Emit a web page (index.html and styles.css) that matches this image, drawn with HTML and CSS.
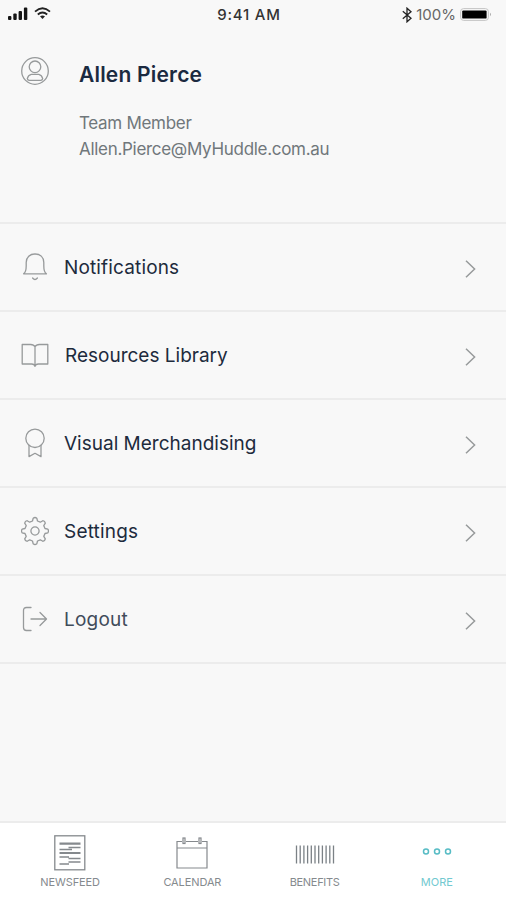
FILE: index.html
```
<!DOCTYPE html>
<html lang="en">
<head>
    <meta charset="UTF-8">
    <meta name="viewport" content="width=device-width, initial-scale=1.0">
    <link rel="stylesheet" href="styles.css">
    <title>More</title>
</head>
<body>
    <div class="screen">

        <div class="status">
            <div class="status_left">
                <svg width="20" height="14" viewBox="0 0 20 14" fill="#151515">
                    <rect x="0" y="9" width="3.4" height="4" rx="1"/>
                    <rect x="5.3" y="6.5" width="3.4" height="6.5" rx="1"/>
                    <rect x="10.6" y="4" width="3.4" height="9" rx="1"/>
                    <rect x="15.9" y="0.5" width="3.4" height="12.5" rx="1"/>
                </svg>
                <svg width="17" height="13" viewBox="0 0 17 13" fill="none" stroke="#222" stroke-width="1.8">
                    <path d="M1 4.6Q8.5-2 16 4.6"/>
                    <path d="M3.8 7.5Q8.5 3.4 13.2 7.5"/>
                    <path d="M6 9.3Q8.5 7.5 11 9.3L8.5 12Z" fill="#222" stroke="none"/>
                </svg>
            </div>
            <div class="time">9:41 AM</div>
            <div class="status_right">
                <svg width="10" height="16" viewBox="0 0 10 16" fill="none" stroke="#222" stroke-width="1.3">
                    <path d="M.8 4.3L9 11.2 5 14.8V1.2L9 4.8.8 11.7"/>
                </svg>
                <span class="percent">100%</span>
                <svg width="32" height="13" viewBox="0 0 32 13">
                    <rect x=".6" y=".6" width="27.8" height="11.8" rx="3" fill="#f8f8f8" stroke="#c4c4c4"/>
                    <rect x="2.2" y="2.4" width="24.4" height="8.2" rx="1.2" fill="#000"/>
                    <path d="M30 4.8Q32 6.5 30 8.2Z" fill="#aaa"/>
                </svg>
            </div>
        </div>

        <div class="profile">
            <svg class="avatar" width="28" height="28" viewBox="0 0 28 28">
                <circle cx="14" cy="14" r="13.3"/>
                <circle cx="14" cy="9.8" r="5.8"/>
                <path d="M10.2 17.4H17.8Q20.8 18.2 21.7 21.6Q21.4 23.3 19.8 23.3H8.2Q6.6 23.3 6.3 21.6Q7.2 18.2 10.2 17.4Z"/>
            </svg>
            <div class="info">
                <div class="name">Allen Pierce</div>
                <div class="role">Team Member</div>
                <div class="email">Allen.Pierce@MyHuddle.com.au</div>
            </div>
        </div>

        <div class="menu">
            <div class="row">
                <svg class="icon" width="28" height="30" viewBox="0 0 28 30">
                    <path d="M2.6 21.8Q5.2 20 5.2 14V10.5C5.2 5 9 2 14 2S22.8 5 22.8 10.5V14Q22.8 20 25.4 21.8Z"/>
                    <path d="M11.6 26Q14 29 16.4 26"/>
                </svg>
                <span class="label notifications">Notifications</span>
                <svg class="arrow" width="11" height="18" viewBox="0 0 11 18"><path d="M1 .8L9.6 9 1 17.2"/></svg>
            </div>
            <div class="row">
                <svg class="icon" width="28" height="30" viewBox="0 0 28 30">
                    <path d="M14 26.3V6.8Q12.8 4.5 9.6 4.5H1.2V24H10.6Q13.5 24 14 26.3Q14.5 24 17.4 24H26.8V4.5H18.4Q15.2 4.5 14 6.8"/>
                </svg>
                <span class="label resources">Resources Library</span>
                <svg class="arrow" width="11" height="18" viewBox="0 0 11 18"><path d="M1 .8L9.6 9 1 17.2"/></svg>
            </div>
            <div class="row">
                <svg class="icon" width="28" height="30" viewBox="0 0 28 30">
                    <circle cx="14" cy="10.3" r="9.2"/>
                    <path d="M8 17.5V28.6L14 25.3 20 28.6V17.5"/>
                </svg>
                <span class="label">Visual Merchandising</span>
                <svg class="arrow" width="11" height="18" viewBox="0 0 11 18"><path d="M1 .8L9.6 9 1 17.2"/></svg>
            </div>
            <div class="row">
                <svg class="icon" width="28" height="30" viewBox="-14 -15 28 30">
                    <path d="M-2.5-10L-1.8-12.8Q0-14.2 1.8-12.8L2.5-10 5.3-8.8 7.8-10.3Q10-10 10.3-7.8L8.8-5.3 10-2.5 12.8-1.8Q14.2 0 12.8 1.8L10 2.5 8.8 5.3 10.3 7.8Q10 10 7.8 10.3L5.3 8.8 2.5 10 1.8 12.8Q0 14.2-1.8 12.8L-2.5 10-5.3 8.8-7.8 10.3Q-10 10-10.3 7.8L-8.8 5.3-10 2.5-12.8 1.8Q-14.2 0-12.8-1.8L-10-2.5-8.8-5.3-10.3-7.8Q-10-10-7.8-10.3L-5.3-8.8Z"/>
                    <circle cx="0" cy="0" r="4.1"/>
                </svg>
                <span class="label settings">Settings</span>
                <svg class="arrow" width="11" height="18" viewBox="0 0 11 18"><path d="M1 .8L9.6 9 1 17.2"/></svg>
            </div>
            <div class="row">
                <svg class="icon" width="28" height="30" viewBox="0 0 28 30">
                    <path d="M10 3.5H5.5Q2.5 3.5 2.5 6.5V23.5Q2.5 26.5 5.5 26.5H10"/>
                    <path d="M10 15H25.3M19 8.5L25.5 15 19 21.5"/>
                </svg>
                <span class="label logout">Logout</span>
                <svg class="arrow" width="11" height="18" viewBox="0 0 11 18"><path d="M1 .8L9.6 9 1 17.2"/></svg>
            </div>
        </div>

        <div class="tabs">
            <div class="tab">
                <svg width="32" height="36" viewBox="0 0 32 36" fill="none" stroke="#85898d">
                    <rect x=".8" y=".8" width="30" height="34" stroke-width="1.3"/>
                    <path d="M5.5 8.7H26.5M5.5 18H26.5" stroke-width="2.2"/>
                    <path d="M14.5 12.5H26.5M5.5 14.5H18M5.5 22H15M14.5 23.5H26.5M14.5 27H26.5M5.5 29H15" stroke-width="1.6"/>
                </svg>
                <span class="tab_text">NEWSFEED</span>
            </div>
            <div class="tab">
                <svg width="32" height="36" viewBox="0 0 32 36" fill="none" stroke="#85898d" stroke-width="1.2">
                    <path d="M6 6.5H1V33H31V6.5H26M10 6.5H22M1 13H31"/>
                    <rect x="7" y="3" width="2" height="5.5"/>
                    <rect x="23" y="3" width="2" height="5.5"/>
                </svg>
                <span class="tab_text">CALENDAR</span>
            </div>
            <div class="tab">
                <svg width="40" height="36" viewBox="0 0 40 36" fill="none" stroke="#7b8186" stroke-width="1.3">
                    <path d="M1.5 10.5V28.5M5.2 10.5V28.5M8.9 10.5V28.5M12.6 10.5V28.5M16.3 10.5V28.5M20 10.5V28.5M23.7 10.5V28.5M27.4 10.5V28.5M31.1 10.5V28.5M34.8 10.5V28.5M38.5 10.5V28.5"/>
                </svg>
                <span class="tab_text benefits">BENEFITS</span>
            </div>
            <div class="tab active">
                <svg width="30" height="36" viewBox="0 0 30 36" fill="none" stroke="#57bcc5" stroke-width="1.5">
                    <circle cx="4" cy="16.5" r="2.5"/>
                    <circle cx="15" cy="16.5" r="2.5"/>
                    <circle cx="26" cy="16.5" r="2.5"/>
                </svg>
                <span class="tab_text more">MORE</span>
            </div>
        </div>

    </div>
</body>
</html>
```
FILE: styles.css
```
*{
    margin:0;
    padding:0;
    box-sizing: border-box;
}

body{
    background-color: #f8f8f8;
    font-family: Inter, "Liberation Sans", sans-serif;
    overflow: hidden;
}

svg{
    display:block;
    flex-shrink: 0;
}

.screen{
    width:100%;
    height:900px;
    display:flex;
    flex-direction: column;
}

/* status bar */
.status{
    height:28px;
    padding:0 14px 0 8px;
    display:grid;
    grid-template-columns: 1fr auto 1fr;
    color:#333;
}

.status_left{
    display:flex;
    gap:6px;
    padding-top:7px;
}

.time{
    font-size:15px;
    font-weight: 500;
    line-height:29px;
    letter-spacing: 0.8px;
    margin-right:2px;
}

.status_right{
    display:flex;
    justify-content: flex-end;
    align-items: center;
    gap:4px;
}

.percent{
    font-size:15px;
    color:#666;
}

/* profile */
.profile{
    height:194px;
    padding:30px 21px 0;
    display:flex;
    gap:30px;
}

.avatar, .icon{
    fill:none;
    stroke:#979a9b;
    stroke-width:1.3;
    stroke-linejoin: round;
    stroke-linecap: round;
}

.avatar{
    margin-top:-1px;
}

.name{
    font-size:21px;
    font-weight: 600;
    line-height:34px;
    letter-spacing: 0.2px;
    color:#1b2a40;
}

.role, .email{
    font-size:17px;
    line-height:26px;
    letter-spacing: -0.3px;
    color:#70777b;
    white-space: nowrap;
}

.role{
    margin-top:18px;
}

/* menu */
.menu{
    border-top:2px solid #ececec;
}

.row{
    height:88px;
    padding:0 30px 0 21px;
    display:flex;
    align-items: center;
    border-bottom:2px solid #ececec;
}

.label{
    flex:1;
    margin:2px 0 0 15px;
    font-size:19px;
    line-height:28px;
    color:#1d2b3d;
}

.arrow{
    fill:none;
    stroke:#979a9b;
    stroke-width:1.5;
    margin-top:3px;
}

.notifications{
    letter-spacing: 0.15px;
}

.resources{
    margin-left:16px;
}

.settings, .logout{
    letter-spacing: 0.2px;
}

.logout{
    color:#414c5a;
}

/* bottom tabs */
.tabs{
    height:79px;
    margin-top:auto;
    padding:12px 8px 0 9px;
    display:grid;
    grid-template-columns: repeat(4, 1fr);
    background-color: white;
    border-top:2px solid #ececec;
}

.tab{
    display:flex;
    flex-direction: column;
    align-items: center;
}

.tab_text{
    margin-top:3px;
    font-size:11px;
    line-height:16px;
    letter-spacing: -0.1px;
    color:#858a8e;
}

.benefits{
    letter-spacing: -0.3px;
}

.active .tab_text{
    color:#72c9d0;
}

.more{
    letter-spacing: 0;
}
```
